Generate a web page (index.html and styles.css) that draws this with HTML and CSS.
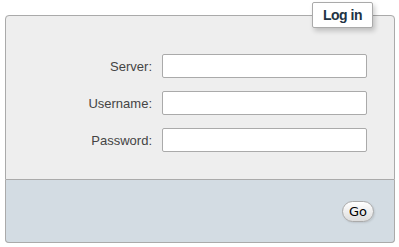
FILE: index.html
```html
<!DOCTYPE html>
<html lang="en">
<head>
  <meta charset="UTF-8">
  <title>Log in</title>
  <link rel="stylesheet" href="styles.css">
</head>
<body>
  <form class="login" action="#" method="post">
    <fieldset class="main">
      <legend>Log in</legend>
      <div class="item">
        <label for="server">Server:</label>
        <input type="text" id="server" name="server">
      </div>
      <div class="item">
        <label for="user">Username:</label>
        <input type="text" id="user" name="user">
      </div>
      <div class="item">
        <label for="pass">Password:</label>
        <input type="password" id="pass" name="pass">
      </div>
    </fieldset>
    <fieldset class="footer">
      <button type="submit">Go</button>
    </fieldset>
  </form>
</body>
</html>
```

FILE: styles.css
```css
* {
  box-sizing: border-box;
}

body {
  margin: 0;
  padding: 2px 5px;
  font-family: "Liberation Sans", Arial, sans-serif;
  font-size: 13px;
  color: #444;
  background: #fff;
}

.login {
  width: 390px;
}

fieldset {
  margin: 0;
  min-width: 0;
  border: 1px solid #aaa;
}

.main {
  background: #eee;
  border-radius: 4px 4px 0 0;
  padding: 26px 27px 27px 10px;
  display: flex;
  flex-direction: column;
  gap: 13px;
}

legend {
  margin-left: auto;
  margin-right: -6px;
  height: 26px;
  padding: 0 10px;
  line-height: 24px;
  background: #fff;
  border: 1px solid #aaa;
  border-radius: 2px;
  box-shadow: 2px 3px 5px rgba(0, 0, 0, 0.2);
  font-size: 14px;
  font-weight: bold;
  letter-spacing: -0.5px;
  color: #234;
}

.item {
  display: flex;
  align-items: center;
  justify-content: flex-end;
  gap: 10px;
}

label {
  text-align: right;
}

input {
  width: 205px;
  height: 24px;
  margin: 0;
  padding: 2px 4px;
  border: 1px solid #aaa;
  border-radius: 2px;
  background: #fff;
  font: inherit;
}

.footer {
  border-top: none;
  border-radius: 0 0 4px 4px;
  background: #d3dce3;
  height: 63px;
  padding: 21px 20px 0 0;
  display: flex;
  justify-content: flex-end;
  align-items: flex-start;
}

button {
  height: 21px;
  padding: 0 6px;
  border: 1px solid #aaa;
  border-radius: 11px;
  background: linear-gradient(#fff, #ddd);
  font-family: "DejaVu Sans", Verdana, sans-serif;
  font-size: 13px;
  line-height: 19px;
  color: #000;
  box-shadow: 1px 1px 2px rgba(0, 0, 0, 0.1);
}
```
